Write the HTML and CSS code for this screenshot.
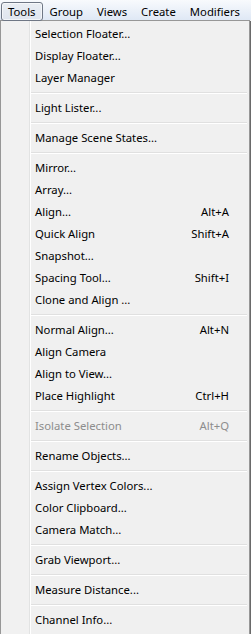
FILE: index.html
```html
<!DOCTYPE html>
<html lang="en">
<head>
    <meta charset="UTF-8">
    <title>Tools Menu</title>
<link rel="stylesheet" href="styles.css">
</head>
<body>
    <!-- Menu Bar -->
    <div class="menubar">
        <span class="menubar-item open">Tools</span>
        <span class="menubar-item">Group</span>
        <span class="menubar-item">Views</span>
        <span class="menubar-item">Create</span>
        <span class="menubar-item">Modifiers</span>
    </div>

    <!-- Tools Dropdown -->
    <div class="dropdown">
        <div class="menu-item"><span>Selection Floater...</span></div>
        <div class="menu-item"><span>Display Floater...</span></div>
        <div class="menu-item"><span>Layer Manager</span></div>
        <div class="separator"></div>
        <div class="menu-item"><span>Light Lister...</span></div>
        <div class="separator"></div>
        <div class="menu-item"><span>Manage Scene States...</span></div>
        <div class="separator"></div>
        <div class="menu-item"><span>Mirror...</span></div>
        <div class="menu-item"><span>Array...</span></div>
        <div class="menu-item"><span>Align...</span><span class="shortcut">Alt+A</span></div>
        <div class="menu-item"><span>Quick Align</span><span class="shortcut">Shift+A</span></div>
        <div class="menu-item"><span>Snapshot...</span></div>
        <div class="menu-item"><span>Spacing Tool...</span><span class="shortcut">Shift+I</span></div>
        <div class="menu-item"><span>Clone and Align ...</span></div>
        <div class="separator"></div>
        <div class="menu-item"><span>Normal Align...</span><span class="shortcut">Alt+N</span></div>
        <div class="menu-item"><span>Align Camera</span></div>
        <div class="menu-item"><span>Align to View...</span></div>
        <div class="menu-item"><span>Place Highlight</span><span class="shortcut">Ctrl+H</span></div>
        <div class="separator"></div>
        <div class="menu-item disabled"><span>Isolate Selection</span><span class="shortcut">Alt+Q</span></div>
        <div class="separator"></div>
        <div class="menu-item"><span>Rename Objects...</span></div>
        <div class="separator"></div>
        <div class="menu-item"><span>Assign Vertex Colors...</span></div>
        <div class="menu-item"><span>Color Clipboard...</span></div>
        <div class="menu-item"><span>Camera Match...</span></div>
        <div class="separator"></div>
        <div class="menu-item"><span>Grab Viewport...</span></div>
        <div class="separator"></div>
        <div class="menu-item"><span>Measure Distance...</span></div>
        <div class="separator"></div>
        <div class="menu-item"><span>Channel Info...</span></div>
    </div>
</body>
</html>
```

FILE: styles.css
```css
/* General Styling */
body {
    margin: 0;
    font-family: 'Noto Sans', sans-serif;
    font-size: 11.3px;
    color: #000;
    background-color: #f0f0f0;
}

/* Menu Bar */
.menubar {
    display: flex;
    height: 20px;
    padding-left: 1px;
    background: linear-gradient(#f8fafd, #dfe8f5);
}

.menubar-item {
    display: flex;
    align-items: center;
    height: 17px;
    margin-top: 2px;
    padding: 0 6px;
    border: 1px solid transparent;
    border-radius: 3px;
}

.menubar-item.open {
    border-color: #6f7785;
    background: linear-gradient(#e9edf3, #dfe5ee);
    box-shadow: inset 0 0 0 1px rgba(255, 255, 255, 0.6);
}

/* Dropdown */
.dropdown {
    box-sizing: border-box;
    width: 250px;
    height: 633px;
    padding: 2px;
    border: 1px solid #979797;
    background: linear-gradient(to right, #f1f1f1 28px, #e2e3e3 28px, #e2e3e3 29px, #fff 29px, #fff 30px, #f0f0f0 30px);
    box-shadow: 1px 1px 0 #6a6a6a;
}

.menu-item {
    display: flex;
    justify-content: space-between;
    height: 22px;
    line-height: 22px;
    padding: 0 18px 0 32px;
}

.menu-item.disabled {
    color: #8d8d8d;
}

.separator {
    height: 0;
    margin: 3px 0 3px 28px;
    border-top: 1px solid #e0e0e0;
    border-bottom: 1px solid #fff;
}
```
